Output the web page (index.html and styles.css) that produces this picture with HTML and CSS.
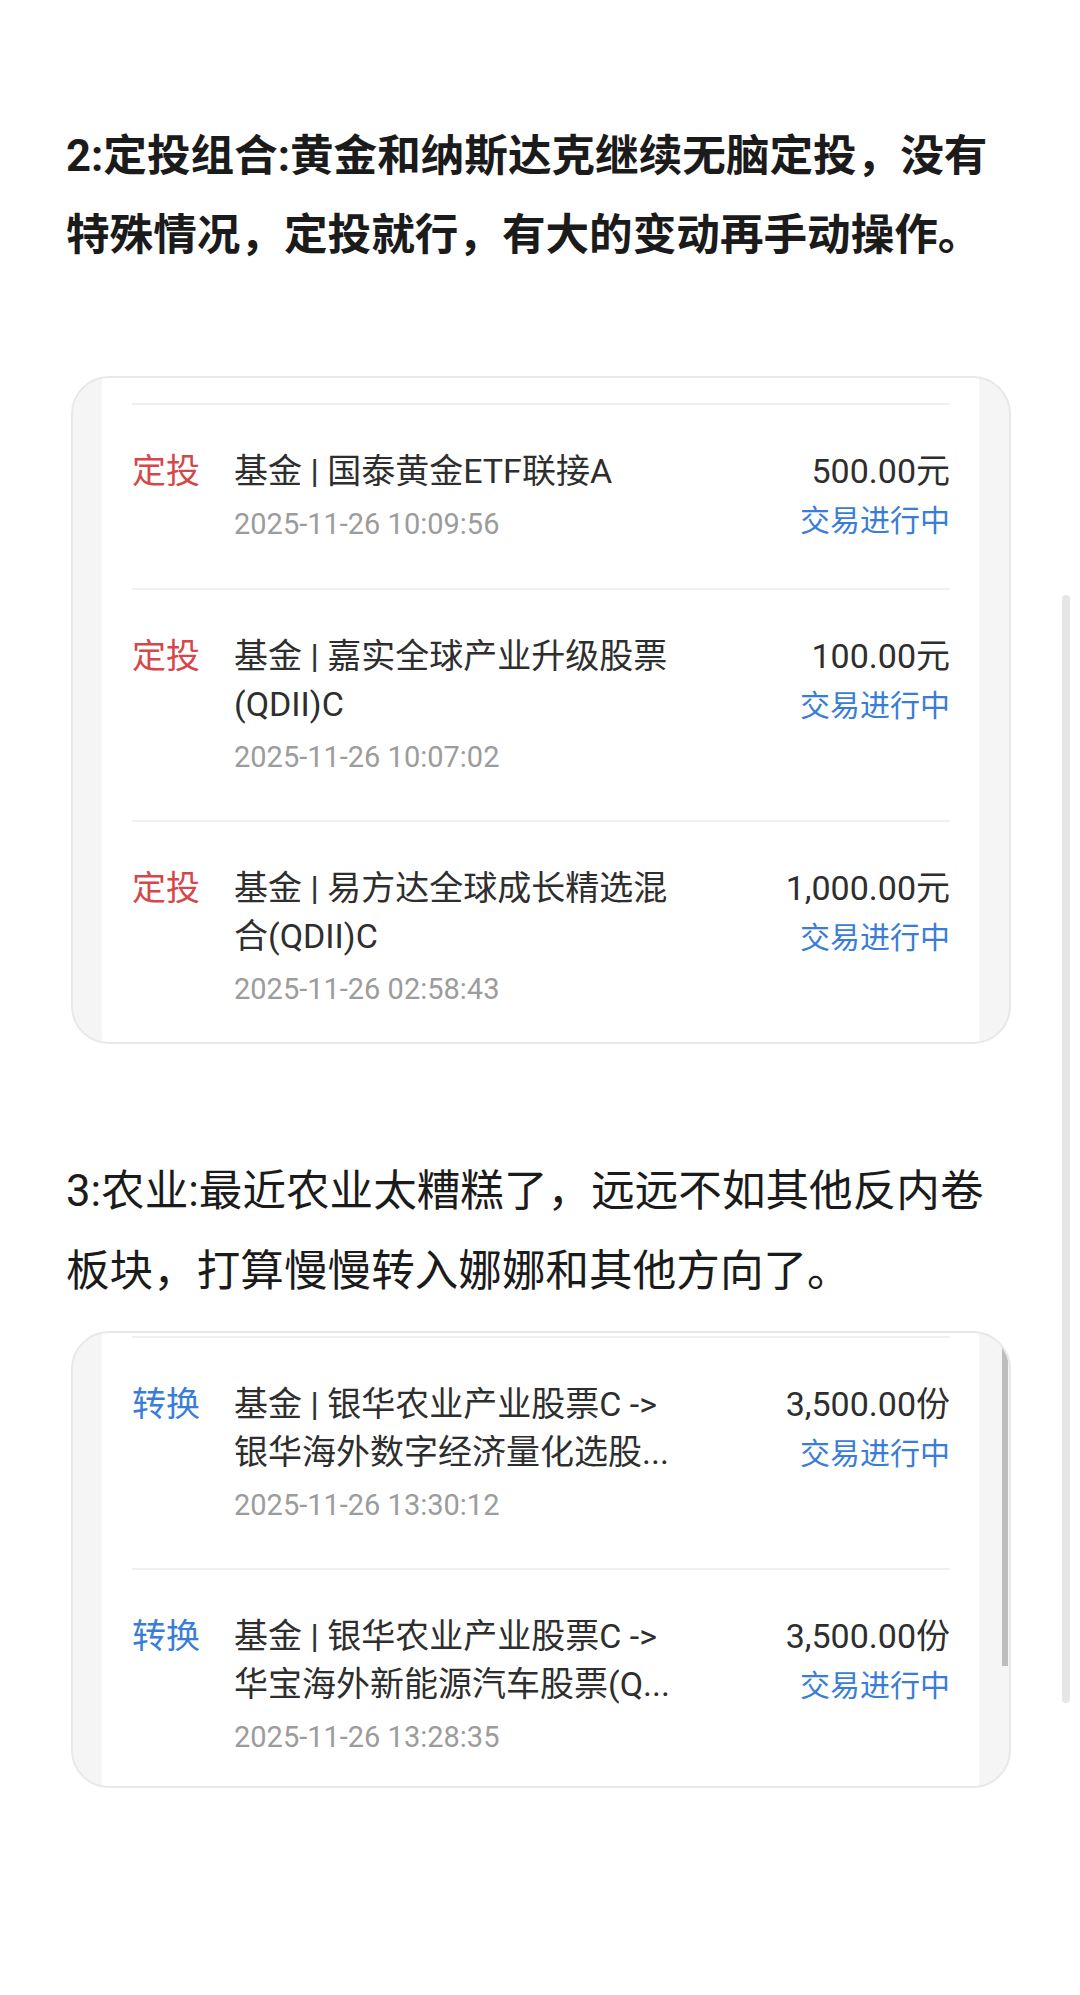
FILE: index.html
```html
<!DOCTYPE html>
<html lang="zh-CN">
<head>
<meta charset="utf-8">
<title>定投记录</title>
<link rel="stylesheet" href="styles.css">
</head>
<body>
<main class="page">
  <p class="para para-bold">2:定投组合:黄金和纳斯达克继续无脑定投，没有特殊情况，定投就行，有大的变动再手动操作。</p>

  <section class="card card-one">
    <div class="panel panel-one">
      <div class="row">
        <div class="tag tag-red">定投</div>
        <div class="info">
          <div class="name">基金 | 国泰黄金ETF联接A</div>
          <div class="date">2025-11-26 10:09:56</div>
        </div>
        <div class="side">
          <div class="amount">500.00元</div>
          <div class="status">交易进行中</div>
        </div>
      </div>
      <div class="row">
        <div class="tag tag-red">定投</div>
        <div class="info">
          <div class="name">基金 | 嘉实全球产业升级股票(QDII)C</div>
          <div class="date">2025-11-26 10:07:02</div>
        </div>
        <div class="side">
          <div class="amount">100.00元</div>
          <div class="status">交易进行中</div>
        </div>
      </div>
      <div class="row">
        <div class="tag tag-red">定投</div>
        <div class="info">
          <div class="name">基金 | 易方达全球成长精选混合(QDII)C</div>
          <div class="date">2025-11-26 02:58:43</div>
        </div>
        <div class="side">
          <div class="amount">1,000.00元</div>
          <div class="status">交易进行中</div>
        </div>
      </div>
    </div>
  </section>

  <p class="para para-regular">3:农业:最近农业太糟糕了，远远不如其他反内卷板块，打算慢慢转入娜娜和其他方向了。</p>

  <section class="card card-two">
    <div class="panel panel-two">
      <div class="row">
        <div class="tag tag-blue">转换</div>
        <div class="info">
          <div class="name">基金 | 银华农业产业股票C <span class="nowrap">-&gt;</span> 银华海外数字经济量化选股...</div>
          <div class="date">2025-11-26 13:30:12</div>
        </div>
        <div class="side">
          <div class="amount">3,500.00份</div>
          <div class="status">交易进行中</div>
        </div>
      </div>
      <div class="row">
        <div class="tag tag-blue">转换</div>
        <div class="info">
          <div class="name">基金 | 银华农业产业股票C <span class="nowrap">-&gt;</span> 华宝海外新能源汽车股票(Q...</div>
          <div class="date">2025-11-26 13:28:35</div>
        </div>
        <div class="side">
          <div class="amount">3,500.00份</div>
          <div class="status">交易进行中</div>
        </div>
      </div>
    </div>
    <div class="card-thumb"></div>
  </section>
</main>
<div class="page-scrollbar"></div>
</body>
</html>
```

FILE: styles.css
```css
html, body {
  margin: 0;
  padding: 0;
  background: #ffffff;
}

body {
  font-family: "Roboto", "Noto Sans CJK SC", sans-serif;
  color: #1c1c1c;
  width: 1080px;
  min-height: 1995px;
  position: relative;
}

.page {
  padding: 117px 66px 0 66px;
}

.para {
  margin: 0;
  font-size: 43.6px;
  line-height: 79px;
  color: #1b1b1b;
}

.para-bold {
  font-weight: 700;
}

.para-regular {
  font-weight: 400;
  line-height: 80px;
  margin-top: 108px;
}

.card {
  position: relative;
  box-sizing: border-box;
  width: 940px;
  margin-left: 5px;
  border: 2px solid #e8e8e8;
  border-radius: 38px;
  background: #f5f5f5;
  padding: 0 30px 0 29px;
  overflow: hidden;
}

.card-one {
  margin-top: 101px;
  height: 668px;
}

.card-two {
  margin-top: 19px;
  height: 457px;
}

.panel {
  box-sizing: border-box;
  height: 100%;
  background: #ffffff;
  padding: 0 29px 0 30px;
}

.panel-one {
  padding-top: 25px;
}

.panel-two {
  padding-top: 3px;
}

.row {
  display: flex;
  align-items: flex-start;
  border-top: 2px solid #f0f0f0;
  padding: 42px 0 43px 0;
}

.tag {
  flex: 0 0 66px;
  margin-right: 34px;
  font-size: 34px;
  line-height: 48px;
  white-space: nowrap;
}

.tag-red {
  color: #d5474a;
}

.tag-blue {
  color: #3a7dd8;
}

.info {
  flex: 0 0 450px;
}

.name {
  font-size: 34px;
  line-height: 48px;
  color: #2e2e2e;
}

.nowrap {
  white-space: nowrap;
}

.date {
  margin-top: 9px;
  font-size: 29px;
  line-height: 40px;
  color: #9c9c9c;
}

.side {
  margin-left: auto;
  text-align: right;
  white-space: nowrap;
}

.amount {
  font-size: 34px;
  line-height: 48px;
  color: #2e2e2e;
}

.status {
  margin-top: 2px;
  font-size: 30px;
  line-height: 48px;
  color: #3a7dd8;
}

.card-thumb {
  position: absolute;
  top: 15px;
  right: 1px;
  width: 6px;
  height: 318px;
  background: #bdbdbd;
}

.page-scrollbar {
  position: absolute;
  left: 1062px;
  top: 595px;
  width: 8px;
  height: 1108px;
  border-radius: 4px;
  background: #e6e6e6;
}
```
